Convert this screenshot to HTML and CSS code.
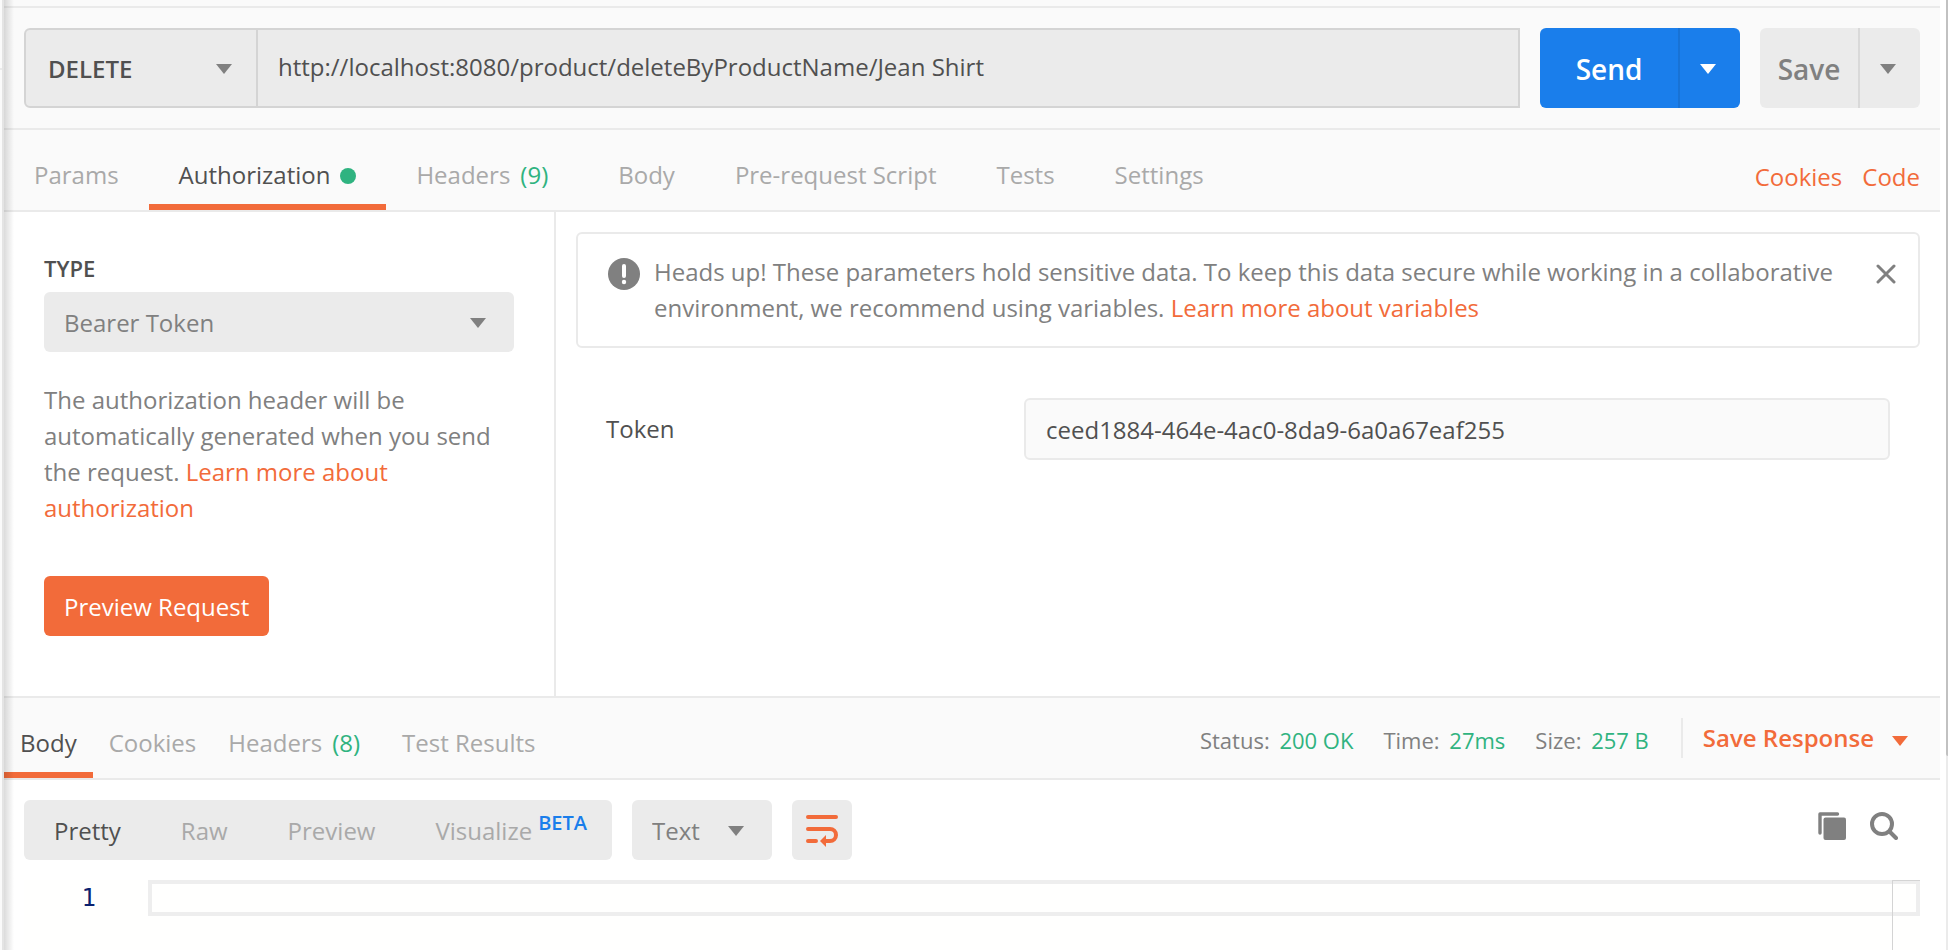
FILE: index.html
```html
<!DOCTYPE html>
<html lang="en">
<head>
<meta charset="utf-8">
<title>Request builder</title>
<link rel="stylesheet" href="styles.css">
</head>
<body>
<div class="window">
  <div class="rail"></div>
  <main class="pane">
    <form class="request-bar">
      <div class="url-group">
        <label class="picker method">
          <select aria-label="Method"><option>DELETE</option><option>GET</option></select>
        </label>
        <input class="url" type="text" aria-label="Request URL" value="http://localhost:8080/product/deleteByProductName/Jean Shirt">
      </div>
      <div class="split send">
        <button type="button" class="split-main">Send</button>
        <button type="button" class="split-more" aria-label="Send options"><span class="caret"></span></button>
      </div>
      <div class="split save">
        <button type="button" class="split-main">Save</button>
        <button type="button" class="split-more" aria-label="Save options"><span class="caret"></span></button>
      </div>
    </form>

    <nav class="tab-bar request-tabs">
      <button type="button" class="tab">Params</button>
      <button type="button" class="tab active">Authorization<span class="dot"></span></button>
      <button type="button" class="tab">Headers<span class="count">(9)</span></button>
      <button type="button" class="tab">Body</button>
      <button type="button" class="tab">Pre-request Script</button>
      <button type="button" class="tab">Tests</button>
      <button type="button" class="tab">Settings</button>
      <div class="tab-links">
        <a href="#">Cookies</a>
        <a href="#">Code</a>
      </div>
    </nav>

    <section class="auth">
      <div class="auth-side">
        <label class="type-label" for="auth-type">TYPE</label>
        <div class="picker type">
          <select id="auth-type"><option>Bearer Token</option><option>Basic Auth</option></select>
        </div>
        <p class="hint">The authorization header will be automatically generated when you send the request. <a href="#">Learn more about authorization</a></p>
        <button type="button" class="preview">Preview Request</button>
      </div>
      <div class="auth-main">
        <div class="notice">
          <svg class="notice-icon" viewBox="0 0 32 32" aria-hidden="true">
            <circle cx="16" cy="16" r="16" fill="#808080"/>
            <path d="M16 8v10" stroke="#fff" stroke-width="4" stroke-linecap="round"/>
            <circle cx="16" cy="24" r="2.2" fill="#fff"/>
          </svg>
          <p>Heads up! These parameters hold sensitive data. To keep this data secure while working in a collaborative environment, we recommend using variables. <a href="#">Learn more about variables</a></p>
          <button type="button" class="close" aria-label="Dismiss">
            <svg viewBox="0 0 20 20" aria-hidden="true"><path d="M2 2l16 16M18 2L2 18" stroke="#808080" stroke-width="3" stroke-linecap="round"/></svg>
          </button>
        </div>
        <div class="field">
          <label for="token">Token</label>
          <input id="token" type="text" value="ceed1884-464e-4ac0-8da9-6a0a67eaf255">
        </div>
      </div>
    </section>

    <nav class="tab-bar response-tabs">
      <button type="button" class="tab active">Body</button>
      <button type="button" class="tab">Cookies</button>
      <button type="button" class="tab">Headers<span class="count">(8)</span></button>
      <button type="button" class="tab">Test Results</button>
      <div class="meta">
        <span>Status: <b>200 OK</b></span>
        <span>Time: <b>27ms</b></span>
        <span>Size: <b>257 B</b></span>
      </div>
      <button type="button" class="save-response">Save Response<span class="caret"></span></button>
    </nav>

    <section class="response">
      <div class="toolbar">
        <div class="modes">
          <button type="button" class="mode active">Pretty</button>
          <button type="button" class="mode">Raw</button>
          <button type="button" class="mode">Preview</button>
          <button type="button" class="mode">Visualize<span class="beta">BETA</span></button>
        </div>
        <div class="picker format">
          <select aria-label="Format"><option>Text</option><option>JSON</option></select>
        </div>
        <button type="button" class="wrap" aria-label="Wrap lines">
          <svg viewBox="0 0 32 34" fill="none" aria-hidden="true">
            <path d="M2 4h28M2 16h22a6 6 0 0 1 0 12h-5M2 28h8" stroke="#f26b3a" stroke-width="4" stroke-linecap="round"/>
            <path d="M20 22v12l-6-6z" fill="#f26b3a"/>
          </svg>
        </button>
        <div class="tools">
          <button type="button" aria-label="Copy">
            <svg viewBox="0 0 28 28" aria-hidden="true">
              <path d="M2 21V2h17.500" fill="none" stroke="#808080" stroke-width="3.400" stroke-linecap="round" stroke-linejoin="round"/>
              <rect x="5.500" y="5.500" width="22.500" height="22.500" rx="2" fill="#808080"/>
            </svg>
          </button>
          <button type="button" aria-label="Search">
            <svg viewBox="0 0 28 28" fill="none" aria-hidden="true">
              <circle cx="12" cy="12" r="10" stroke="#808080" stroke-width="4"/>
              <path d="M19.500 19.500l6.500 6.500" stroke="#808080" stroke-width="4" stroke-linecap="round"/>
            </svg>
          </button>
        </div>
      </div>
      <div class="editor">
        <span class="line-number">1</span>
        <div class="code"><div class="current-line"></div><div class="ruler"></div></div>
      </div>
    </section>
  </main>
  <div class="scrollbar"><div class="thumb"></div></div>
</div>
</body>
</html>
```
FILE: styles.css
```css
* { box-sizing: border-box; }

body {
  margin: 0;
  background: #fff;
  color: #505050;
  font: 24px/36px "Open Sans", "Noto Sans", sans-serif;
}

button, input, select {
  margin: 0;
  padding: 0;
  border: 0;
  border-radius: 0;
  background: none;
  color: inherit;
  font: inherit;
}

a { color: #f26b3a; text-decoration: none; }
p { margin: 0; }
svg { display: block; }

.window { display: flex; min-height: 100vh; }

.rail {
  position: relative;
  flex: none;
  width: 4px;
  background: #fafafa;
  border-right: 2px solid #e4e4e4;
}
.rail::before {
  content: "";
  display: block;
  height: 68px;
  border-bottom: 2px solid #eaeaea;
}
.rail::after {
  content: "";
  position: absolute;
  top: 0;
  bottom: 0;
  left: 4px;
  width: 10px;
  background: linear-gradient(to right, rgba(0, 0, 0, .14), rgba(0, 0, 0, 0));
}

.pane { flex: 1; min-width: 0; display: flex; flex-direction: column; }

.scrollbar { flex: none; width: 2px; margin-left: 6px; background: #ebebeb; }
.thumb { height: 756px; background: #c1c1c1; border-radius: 0 0 0 2px; }

.caret {
  flex: none;
  width: 16px;
  height: 10px;
  background: currentColor;
  clip-path: polygon(0 0, 100% 0, 50% 100%);
}

/* Drop-downs */
.picker { position: relative; display: block; }
.picker::after {
  content: "";
  position: absolute;
  top: 50%;
  right: 28px;
  width: 16px;
  height: 10px;
  margin-top: -4px;
  background: #808080;
  clip-path: polygon(0 0, 100% 0, 50% 100%);
  pointer-events: none;
}
.picker select { appearance: none; width: 100%; height: 100%; padding: 2px 20px 0; }

/* Request bar */
.request-bar {
  display: flex;
  gap: 20px;
  padding: 20px 20px;
  background: #fafafa;
  border-top: 2px solid #eaeaea;
  margin-top: 6px;
  box-shadow: 0 -6px #fafafa;
}
.url-group {
  flex: 1;
  display: flex;
  height: 80px;
  background: #ebebeb;
  border: 2px solid #d4d4d4;
  border-radius: 6px 0 0 6px;
}
.method { width: 232px; border-right: 2px solid #d4d4d4; font-weight: 600; }
.method select { padding-left: 22px; }
.method::after { right: 24px; }
.url { flex: 1; min-width: 0; padding: 0 20px 2px; }

.split { display: flex; height: 80px; border-radius: 6px; overflow: hidden; font-size: 28px; font-weight: 600; }
.split-main { flex: 1; padding-top: 2px; }
.split-more { width: 62px; padding: 2px 4px 0 0; border-left: 2px solid; display: flex; align-items: center; justify-content: center; }
.send { width: 200px; background: #1a7eeb; color: #fff; }
.send .split-more { border-color: #1873d6; }
.save { width: 160px; background: #ebebeb; color: #808080; }
.save .split-more { border-color: #d9d9d9; }

/* Tabs */
.tab-bar {
  display: flex;
  height: 84px;
  background: #fafafa;
  border-top: 2px solid #eaeaea;
  border-bottom: 2px solid #eaeaea;
}
.tab {
  display: flex;
  align-items: center;
  padding: 16px 30px 0;
  border-bottom: 6px solid transparent;
  color: #a9a9a9;
  white-space: nowrap;
}
.tab.active { color: #505050; border-color: #f26b3a; }
.count { margin: 0 10px; color: #2fb380; }
.dot { width: 16px; height: 16px; margin: 2px 0 0 10px; border-radius: 50%; background: #2fb380; }
.tab-links { display: flex; gap: 20px; margin-left: auto; padding: 29px 20px 0 0; }

.response-tabs .tab { padding: 16px 16px 0; }
.meta { display: flex; gap: 30px; margin-left: auto; padding-top: 24px; color: #808080; font-size: 22px; white-space: nowrap; }
.meta b { margin-left: 4px; color: #2fb380; font-weight: 400; }
.save-response {
  display: flex;
  align-items: center;
  gap: 18px;
  height: 40px;
  margin: 20px 32px 0;
  padding: 0 0 0 20px;
  border-left: 2px solid #eaeaea;
  color: #f26b3a;
  font-weight: 600;
  white-space: nowrap;
}
.save-response .caret { margin-top: 6px; }

/* Authorization */
.auth { display: flex; min-height: 484px; }
.auth-side { flex: none; width: 552px; padding: 38px 40px 60px; border-right: 2px solid #eaeaea; }
.type-label { display: block; font-size: 22px; font-weight: 600; line-height: 36px; margin-bottom: 6px; }
.type { height: 60px; background: #ebebeb; border-radius: 6px; color: #808080; }
.hint { margin: 30px 0 50px; color: #808080; }
.preview { height: 60px; padding: 2px 20px 0; border-radius: 6px; background: #f26b3a; color: #fff; }

.auth-main { flex: 1; min-width: 0; padding: 20px; }
.notice {
  display: flex;
  padding: 20px 16px 20px 30px;
  border: 2px solid #eaeaea;
  border-radius: 6px;
  color: #808080;
}
.notice p { flex: 1; }
.notice-icon { flex: none; width: 32px; height: 32px; margin: 4px 14px 0 0; }
.close { flex: none; align-self: flex-start; padding: 10px 6px; }
.close svg { width: 20px; height: 20px; }
.field { display: grid; grid-template-columns: 418px 1fr; align-items: center; margin: 50px 30px 0; }
.field input { height: 62px; padding: 0 20px; background: #fafafa; border: 2px solid #eaeaea; border-radius: 6px; }

/* Response */
.response { flex: 1; display: flex; flex-direction: column; padding: 20px 20px 0; }
.toolbar { display: flex; gap: 20px; height: 60px; margin-bottom: 20px; }
.modes { display: flex; padding-right: 25px; background: #ebebeb; border-radius: 6px; color: #a9a9a9; }
.mode { padding: 2px 30px 0; white-space: nowrap; }
.mode:last-child { padding-right: 0; }
.mode.active { color: #505050; }
.beta { margin-left: 6px; color: #1a7eeb; font-size: 20px; font-weight: 600; line-height: 20px; vertical-align: 10px; }
.format { width: 140px; background: #ebebeb; border-radius: 6px; color: #808080; }
.wrap { width: 60px; padding: 0 14px; background: #ebebeb; border-radius: 6px; }
.tools { display: flex; gap: 24px; margin-left: auto; padding: 12px 22px 0 0; align-items: flex-start; }
.tools svg { width: 28px; height: 28px; }

.editor { flex: 1; display: flex; background: #fffffe; }
.line-number { width: 124px; padding-right: 52px; color: #0b216f; font-family: "DejaVu Sans Mono", monospace; text-align: right; }
.code { position: relative; flex: 1; }
.current-line { height: 36px; border: 4px solid #eee; }
.ruler { position: absolute; top: 0; right: 0; bottom: 0; width: 28px; border-top: 1px solid #d4d4d4; border-left: 1px solid #d4d4d4; }
```
